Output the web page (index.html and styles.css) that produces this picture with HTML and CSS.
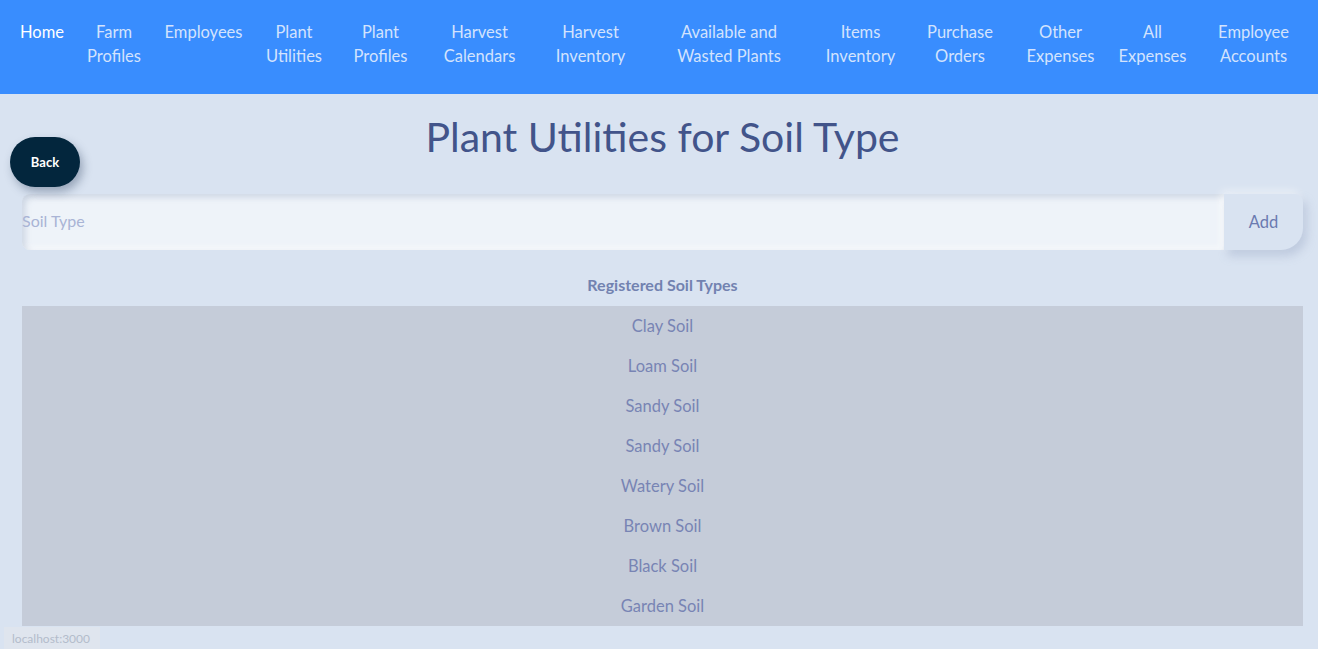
FILE: index.html
```html
<!DOCTYPE html>
<html lang="en">
<head>
<meta charset="utf-8">
<title>Plant Utilities for Soil Type</title>
<link rel="stylesheet" href="styles.css">
</head>
<body>
<nav class="navbar">
  <a class="nav-item active w68">Home</a>
  <a class="nav-item w76">Farm<br>Profiles</a>
  <a class="nav-item w103">Employees</a>
  <a class="nav-item w78">Plant<br>Utilities</a>
  <a class="nav-item w95">Plant<br>Profiles</a>
  <a class="nav-item w103">Harvest<br>Calendars</a>
  <a class="nav-item w119">Harvest<br>Inventory</a>
  <a class="nav-item w158">Available and<br>Wasted Plants</a>
  <a class="nav-item w105">Items<br>Inventory</a>
  <a class="nav-item w94">Purchase<br>Orders</a>
  <a class="nav-item w107">Other<br>Expenses</a>
  <a class="nav-item w77">All<br>Expenses</a>
  <a class="nav-item w125">Employee<br>Accounts</a>
</nav>

<main class="page">
  <button class="back-btn">Back</button>
  <h1 class="title">Plant Utilities for Soil Type</h1>

  <form class="add-form">
    <input class="soil-input" type="text" placeholder="Soil Type">
    <button class="add-btn" type="button">Add</button>
  </form>

  <h2 class="list-title">Registered Soil Types</h2>
  <ul class="soil-list">
    <li>Clay Soil</li>
    <li>Loam Soil</li>
    <li>Sandy Soil</li>
    <li>Sandy Soil</li>
    <li>Watery Soil</li>
    <li>Brown Soil</li>
    <li>Black Soil</li>
    <li>Garden Soil</li>
  </ul>
</main>

<div class="status-bubble">localhost:3000</div>
</body>
</html>
```

FILE: styles.css
```css
* { box-sizing: border-box; }

html, body {
  margin: 0;
  padding: 0;
  background: #d9e3f1;
  font-family: "Lato", "Noto Sans", sans-serif;
  overflow: hidden;
}

.navbar {
  height: 94px;
  background: #398dfe;
  display: flex;
  align-items: flex-start;
  padding: 20px 0 0 8px;
}

.nav-item {
  color: #d3e3fd;
  font-size: 16.5px;
  line-height: 24px;
  text-align: center;
  text-decoration: none;
  flex: none;
}

.nav-item.active { color: #ffffff; }

.w68 { width: 68px; }
.w76 { width: 76px; }
.w77 { width: 77px; }
.w78 { width: 78px; }
.w94 { width: 94px; }
.w95 { width: 95px; }
.w103 { width: 103px; }
.w105 { width: 105px; }
.w107 { width: 107px; }
.w119 { width: 119px; }
.w125 { width: 125px; }
.w158 { width: 158px; }

.page {
  position: relative;
  margin: 0 15px 0 22px;
}

.back-btn {
  position: absolute;
  left: -12px;
  top: 43px;
  width: 70px;
  height: 50px;
  border: none;
  border-radius: 25px;
  background: #03263d;
  color: #ffffff;
  font-family: inherit;
  font-weight: 700;
  font-size: 13px;
  padding-bottom: 2px;
  box-shadow: 3px 5px 10px rgba(30, 50, 80, 0.35);
}

.title {
  margin: 0;
  padding-top: 18px;
  height: 100px;
  text-align: center;
  font-weight: 400;
  font-size: 41px;
  line-height: 50px;
  color: #42548a;
}

.add-form {
  display: flex;
  height: 56px;
  margin: 0;
}

.soil-input {
  flex: 1;
  border: none;
  outline: none;
  padding: 0 0 3px;
  background: #eef3f9;
  border-radius: 8px 0 0 8px;
  box-shadow: inset 3px 3px 6px rgba(160, 175, 200, 0.45), inset -2px -2px 6px rgba(255,255,255,0.8);
  font-family: inherit;
  font-size: 16px;
  color: #5a6a9a;
}

.soil-input::placeholder { color: #a9b4d5; }

.add-btn {
  width: 79px;
  border: none;
  background: #d9e3f1;
  border-radius: 0 8px 22px 0;
  box-shadow: 4px 6px 10px rgba(150, 165, 195, 0.4), -3px -3px 8px rgba(255,255,255,0.5);
  font-family: inherit;
  font-size: 16.5px;
  padding-bottom: 2px;
  color: #6a7ab0;
}

.list-title {
  margin: 0;
  padding: 25px 0 11px;
  text-align: center;
  font-size: 16px;
  font-weight: 700;
  line-height: 20px;
  color: #7282b0;
}

.soil-list {
  list-style: none;
  margin: 0;
  padding: 0;
  background: #c5ccd9;
}

.soil-list li {
  height: 40px;
  line-height: 40px;
  text-align: center;
  font-size: 16.5px;
  color: #7884b4;
}

.status-bubble {
  position: fixed;
  left: 4px;
  bottom: 0;
  width: 96px;
  height: 22px;
  padding: 4px 0 0 8px;
  background: #dfe5ee;
  color: #b3bccb;
  font-size: 12px;
  line-height: 16px;
}
```
